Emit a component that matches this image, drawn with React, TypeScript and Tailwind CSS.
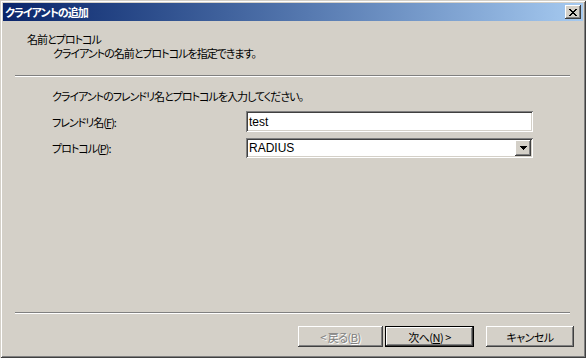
const jp = "font-['Noto_Sans_CJK_JP','Noto_Sans',sans-serif] [font-feature-settings:'palt'] tracking-[-1px]";

const raised =
  "shadow-[inset_-1px_-1px_0_#404040,inset_1px_1px_0_#ffffff,inset_-2px_-2px_0_#808080,inset_2px_2px_0_#d4d0c8]";
const sunken =
  "shadow-[inset_1px_1px_0_#808080,inset_-1px_-1px_0_#ffffff,inset_2px_2px_0_#404040,inset_-2px_-2px_0_#d4d0c8]";

const xPattern = [
  "XX....XX",
  ".XX..XX.",
  "..XXXX..",
  "...XX...",
  "..XXXX..",
  ".XX..XX.",
  "XX....XX",
];

function CloseGlyph() {
  return (
    <svg width="8" height="7" viewBox="0 0 8 7" shapeRendering="crispEdges">
      {xPattern.map((row, y) =>
        row.split("").map((c, x) =>
          c === "X" ? <rect key={`${x}-${y}`} x={x} y={y} width="1" height="1" fill="#000" /> : null
        )
      )}
    </svg>
  );
}

function ArrowGlyph() {
  return (
    <svg width="7" height="4" viewBox="0 0 7 4" shapeRendering="crispEdges">
      <rect x="0" y="0" width="7" height="1" fill="#000" />
      <rect x="1" y="1" width="5" height="1" fill="#000" />
      <rect x="2" y="2" width="3" height="1" fill="#000" />
      <rect x="3" y="3" width="1" height="1" fill="#000" />
    </svg>
  );
}

function Separator() {
  return <div className="ml-[12px] mr-[13px] h-0 border-t border-t-[#808080] border-b border-b-white" />;
}

export default function App() {
  return (
    <div
      className={`w-[586px] h-[358px] bg-[#d4d0c8] p-[3px] flex flex-col text-[11px] leading-[14px] text-black ${jp} shadow-[inset_1px_1px_0_#d4d0c8,inset_-1px_-1px_0_#404040,inset_2px_2px_0_#ffffff,inset_-2px_-2px_0_#808080]`}
    >
      {/* title bar */}
      <div className="h-[18px] flex items-center bg-linear-to-r from-[#0a246a] to-[#a6caf0] pl-[2px] pr-[2px]">
        <span className="flex-1 text-white font-bold">クライアントの追加</span>
        <div className={`w-[16px] h-[14px] bg-[#d4d0c8] flex items-center justify-center ${raised}`}>
          <CloseGlyph />
        </div>
      </div>

      {/* header */}
      <div className="h-[54px] pt-[11px]">
        <div className="pl-[24px]">名前とプロトコル</div>
        <div className="pl-[50px]">クライアントの名前とプロトコルを指定できます。</div>
      </div>
      <Separator />

      {/* body */}
      <div className="pl-[49px] pt-[12px]">
        <div>クライアントのフレンドリ名とプロトコルを入力してください。</div>

        <div className="mt-[8px] flex items-center h-[21px]">
          <div className="w-[194px]">
            フレンドリ名(<span className="underline">F</span>):
          </div>
          <div
            className={`w-[287px] h-[21px] bg-white pl-[3px] flex items-center text-[12px] tracking-normal font-['Liberation_Sans',sans-serif] ${sunken}`}
          >
            test
          </div>
        </div>

        <div className="mt-[6px] flex items-center h-[20px]">
          <div className="w-[194px]">
            プロトコル(<span className="underline">P</span>):
          </div>
          <div className={`w-[287px] h-[20px] bg-white pl-[3px] pr-[2px] flex items-center ${sunken}`}>
            <span className="flex-1 text-[12px] tracking-normal font-['Liberation_Sans',sans-serif]">RADIUS</span>
            <div className={`w-[16px] h-[16px] bg-[#d4d0c8] flex items-center justify-center ${raised}`}>
              <ArrowGlyph />
            </div>
          </div>
        </div>
      </div>

      <div className="flex-1" />
      <Separator />

      {/* buttons */}
      <div className="h-[41px] pt-[12px] flex justify-end pr-[9px] tracking-[-0.5px]">
        <div
          className={`w-[85px] h-[21px] flex items-center justify-center text-[#808080] [text-shadow:1px_1px_0_#ffffff] ${raised}`}
        >
          &lt;&nbsp;戻る(<span className="underline">B</span>)
        </div>
        <div className="ml-[2px] w-[89px] h-[21px] border border-black">
          <div className={`w-full h-full flex items-center justify-center ${raised}`}>
            次へ(<span className="underline">N</span>)&nbsp;&gt;
          </div>
        </div>
        <div className={`ml-[12px] w-[88px] h-[21px] flex items-center justify-center ${raised}`}>
          キャンセル
        </div>
      </div>
    </div>
  );
}
